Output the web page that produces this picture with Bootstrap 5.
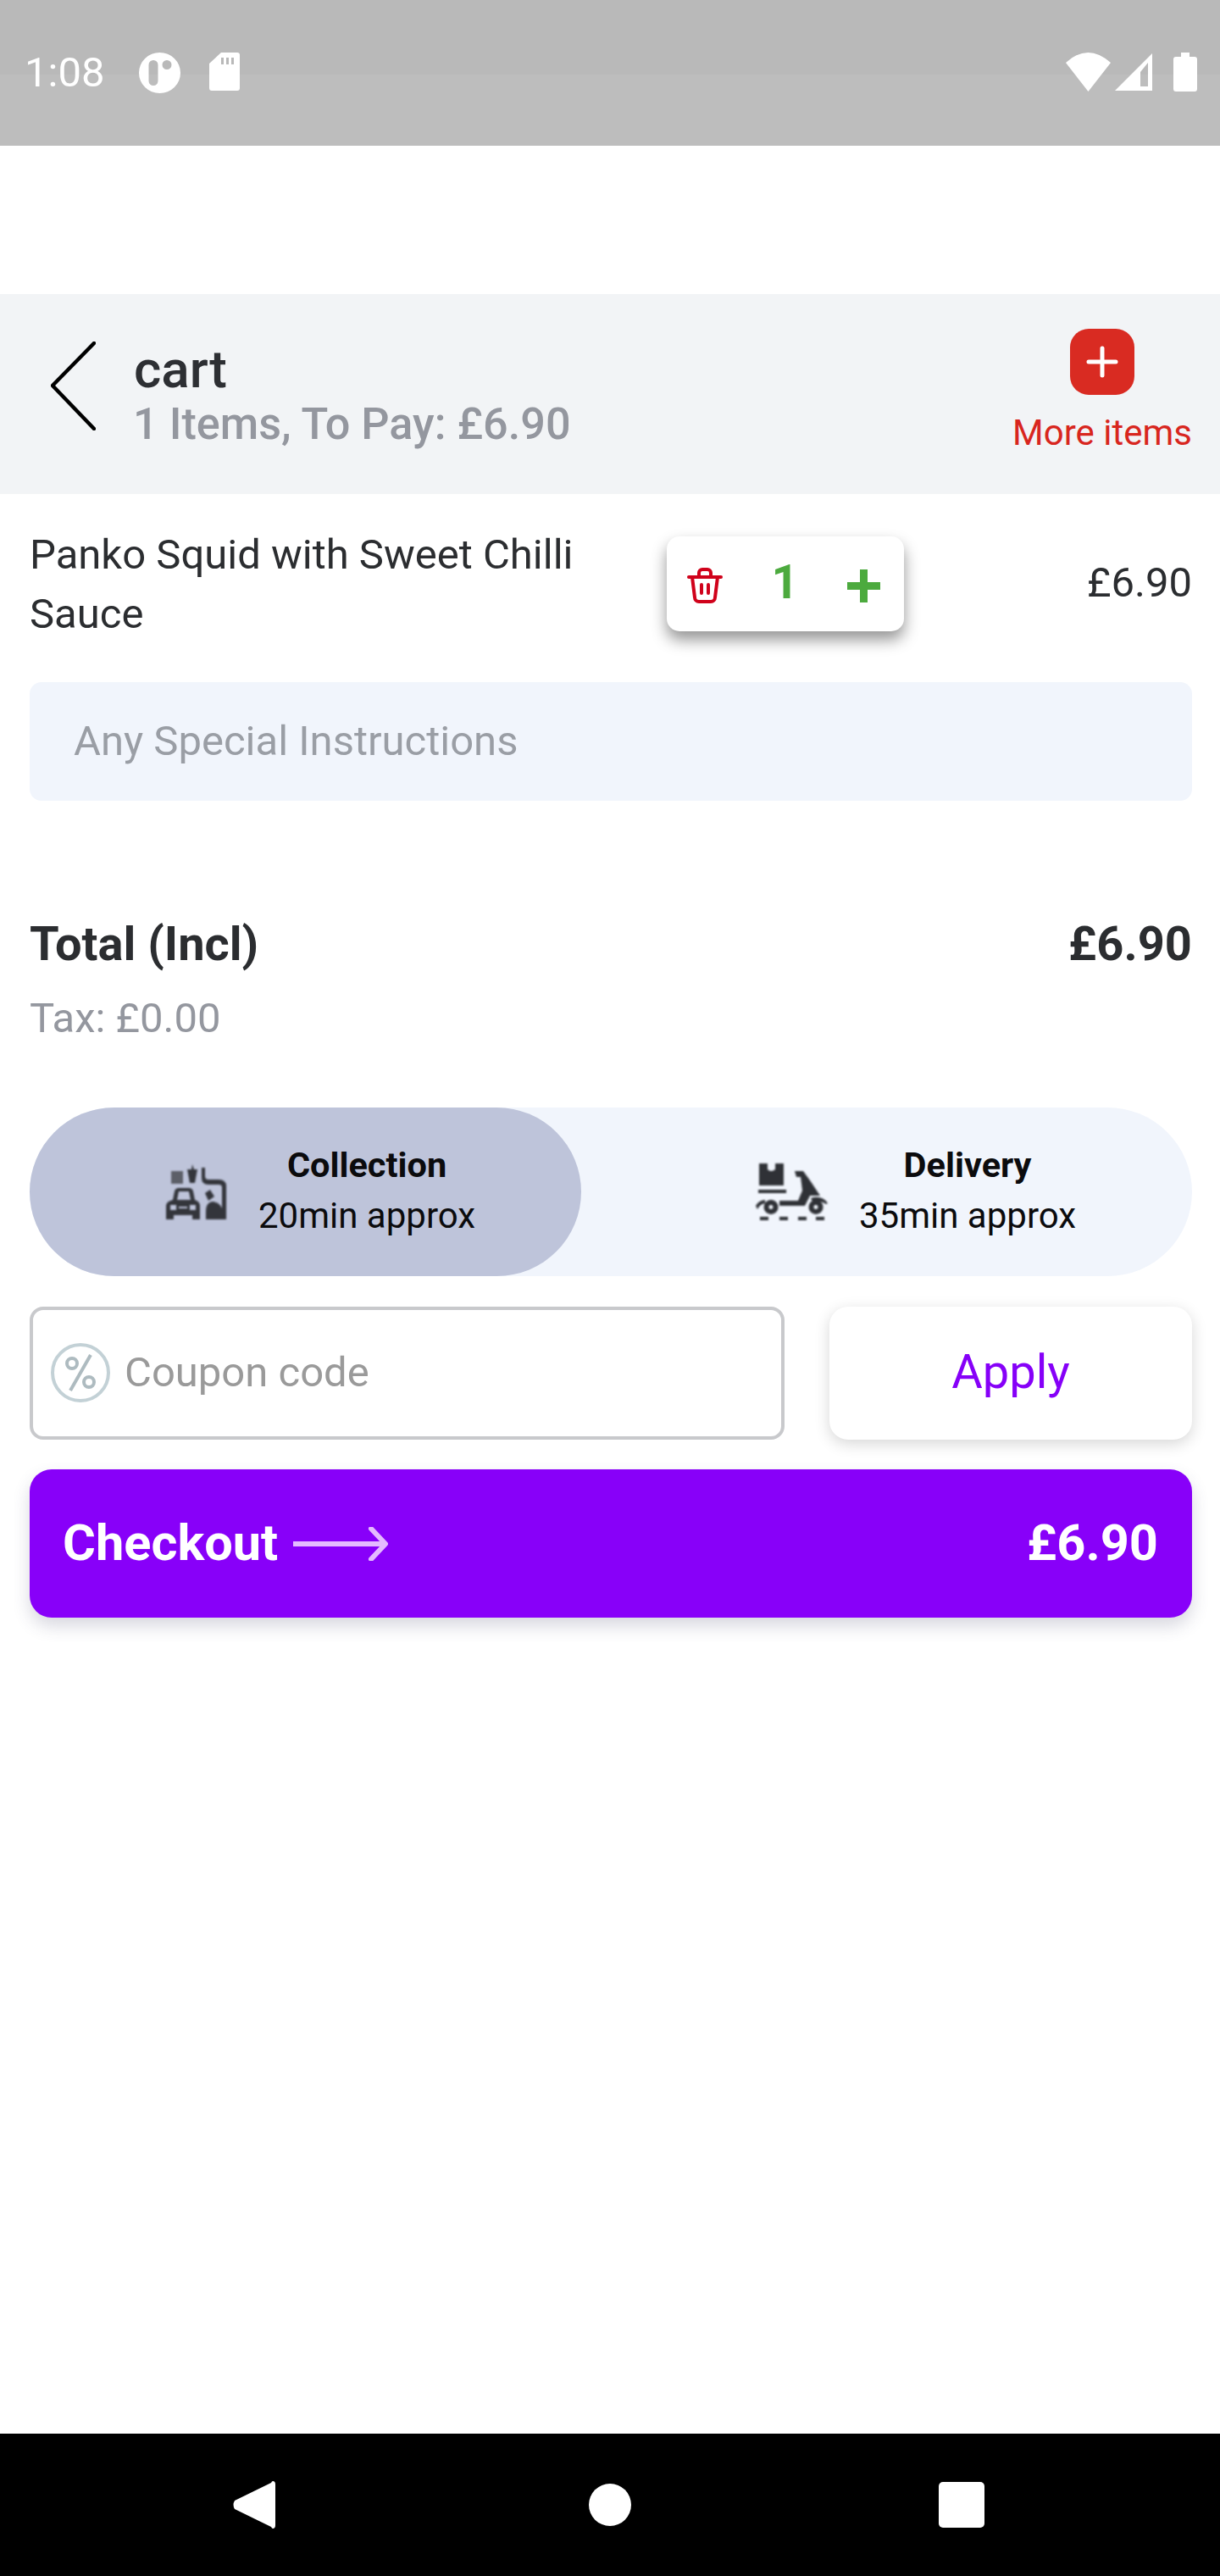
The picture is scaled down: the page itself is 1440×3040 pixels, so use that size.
<!doctype html>
<html lang="en">
<head>
<meta charset="utf-8">
<title>cart</title>
<link href="https://cdn.jsdelivr.net/npm/bootstrap@5.3.0/dist/css/bootstrap.min.css" rel="stylesheet">
<style>
html,body{margin:0;background:#fff}
body{width:1440px;height:3040px;font-family:Roboto,"Liberation Sans",sans-serif;color:#2b2d30}
.sys-top{height:172px;padding:62px 27px 0 29px;background:linear-gradient(#b9b9b9 0,#b9b9b9 88px,#bdbdbd 88px,#bdbdbd 100%)}
.sys-time{font-size:49px;line-height:48px;color:#fff;margin-top:0;font-weight:400;width:93px}
.gap-a{margin-left:42px}.gap-b{margin-left:34px}.gap-c{margin-left:5px}.gap-d{margin-left:25px}
.top-blank{height:175px}
.head-bar{height:236px;background:#f2f4f6;padding:0 33px 0 60px}
.back-ic{margin-top:56px;margin-right:45px}
.head-txt{padding-top:61px}
.head-title{font-size:62px;line-height:56px;font-weight:500;color:#2d2f33}
.head-sub{font-size:52.200px;line-height:66px;font-weight:500;color:#94979f;padding-top:4px;margin-left:-1px}
.more-col{padding-top:41px}
.more-btn{width:76px;height:78px;background:#d92b22;border-radius:22px}
.more-lbl{font-size:42px;line-height:50px;color:#d8261e;margin-top:20px}
.page-x{padding:0 33px 0 35px}
.item-row{padding-top:37px}
.item-name{width:700px;margin-right:52px;font-size:49px;line-height:70px;color:#2b2d30}
.qty-box{width:280px;height:112px;margin-top:13px;background:#fff;border-radius:15px;box-shadow:0 10px 18px rgba(0,0,0,.42);padding:0 28px 0 24px}
.qty-trash{margin-top:4px}
.qty-num{font-size:56px;line-height:56px;font-weight:700;color:#4caa3e;margin-top:-4px}
.qty-plus{margin-top:4px}
.item-price{font-size:49px;line-height:70px;margin-top:33px;color:#2b2d30}
.note-box{height:140px;margin-top:45px;background:#f1f5fc;border-radius:14px;padding:0 0 0 52px;font-size:49px;color:#9a9ea5}
.total-row{margin-top:134px;font-size:56px;line-height:70px;font-weight:700;color:#2b2d30}
.tax-row{margin-top:23px;font-size:49px;line-height:60px;color:#94979f}
.mode-bar{height:199px;margin-top:75px;background:#f1f5fc;border-radius:100px}
.mode-on{width:651px;background:#bec4da;border-radius:100px;padding-left:161px}
.mode-off{padding-left:206px}
.mode-gap-a{margin-right:37px}.mode-gap-b{margin-right:37px}
.mode-ic{filter:blur(.8px)}
.mode-txt{margin-top:-4px}
.mode-t{font-size:41.500px;line-height:60px;font-weight:700;color:#0b0b0d}
.mode-s{font-size:42px;line-height:60px;color:#0b0b0d}
.promo-row{margin-top:36px;height:157px}
.promo-in{width:891px;height:157px;border:4px solid #c8c9cc;border-radius:16px;background:#fff;padding:0 0 2px 21px;font-size:49px;color:#9a9a9a}
.promo-in svg{margin-right:17px;filter:blur(.5px)}
.promo-go{width:428px;height:157px;border:0;border-radius:22px;background:#fff;box-shadow:0 5px 18px rgba(0,0,0,.16);font-size:56px;color:#8600f8;padding:0 0 4px}
.pay-btn{margin-top:35px;height:175px;border:0;border-radius:26px;background:#8800f9;color:#fff;font-size:59.500px;font-weight:700;padding:0 40px 0 39px;box-shadow:0 10px 20px rgba(60,60,100,.2)}
.pay-btn svg{margin-left:18px}
.nav-sys{height:168px;background:#000;padding-left:275px}
.nav-a{margin-left:370px}.nav-b{margin-left:363px}
</style>
</head>
<body class="d-flex flex-column">
<div class="sys-top d-flex justify-content-between align-items-start">
  <div class="d-flex align-items-start">
    <span class="sys-time">1:08</span>
    <svg class="gap-a" width="49" height="48" viewBox="0 0 49 48"><path fill="#fff" fill-rule="evenodd" d="M24.500 0a24.500 24 0 1 0 0 48a24.500 24 0 1 0 0-48zM17 9a5.500 5.500 0 0 1 5.500 5.500v19a5.500 5.500 0 0 1-11 0v-19A5.500 5.500 0 0 1 17 9zM33 9a5.500 5.500 0 1 1 0 11a5.500 5.500 0 0 1 0-11z"/></svg>
    <svg class="gap-b" width="36" height="45" viewBox="0 0 36 45"><path fill="#fff" fill-rule="evenodd" d="M14 0H33a3 3 0 0 1 3 3V42a3 3 0 0 1-3 3H3a3 3 0 0 1-3-3V13zM14 6v8h3V6zM20 6v8h3V6zM26 6v8h3V6z"/></svg>
  </div>
  <div class="d-flex align-items-start">
    <svg width="53" height="46" viewBox="0 0 53 46"><path fill="#fff" d="M0 12Q26-12 53 12L26.500 46z"/></svg>
    <svg class="gap-c" width="44" height="45" viewBox="0 0 44 45"><path fill="#fff" fill-rule="evenodd" d="M0 45L44 1V45zM30 40H39V12L30 23z"/></svg>
    <svg class="gap-d" width="28" height="46" viewBox="0 0 28 46"><path fill="#fff" d="M9 0H19V5H25a3 3 0 0 1 3 3V43a3 3 0 0 1-3 3H3a3 3 0 0 1-3-3V8a3 3 0 0 1 3-3H9z"/></svg>
  </div>
</div>
<div class="top-blank"></div>
<div class="head-bar d-flex align-items-start">
  <svg class="back-ic" width="53" height="105" viewBox="0 0 53 105"><path fill="none" stroke="#000" stroke-width="4.500" stroke-linecap="round" stroke-linejoin="round" d="M51 2L2 52L51 103"/></svg>
  <div class="head-txt flex-grow-1">
    <div class="head-title">cart</div>
    <div class="head-sub">1 Items, To Pay: £6.90</div>
  </div>
  <div class="more-col d-flex flex-column align-items-center">
    <div class="more-btn d-flex align-items-center justify-content-center">
      <svg width="38" height="38" viewBox="0 0 38 38"><path fill="none" stroke="#fff" stroke-width="5" stroke-linecap="round" d="M19 3V35M3 19H35"/></svg>
    </div>
    <div class="more-lbl">More items</div>
  </div>
</div>
<div class="page-x d-flex flex-column">
  <div class="item-row d-flex align-items-start">
    <div class="item-name">Panko Squid with Sweet Chilli Sauce</div>
    <div class="qty-box d-flex align-items-center justify-content-between">
      <svg class="qty-trash" width="42" height="42" viewBox="0 0 42 42"><g fill="none" stroke="#d0021b" stroke-width="4" stroke-linecap="round" stroke-linejoin="round"><path d="M2 11H40"/><path d="M14 11V6a4 4 0 0 1 4-4h6a4 4 0 0 1 4 4v5"/><path d="M6 11L9 35a5 5 0 0 0 5 5h14a5 5 0 0 0 5-5l3-24"/><path d="M17 20V30M25 20V30"/></g></svg>
      <span class="qty-num">1</span>
      <svg class="qty-plus" width="39" height="39" viewBox="0 0 39 39"><path fill="none" stroke="#4caa3e" stroke-width="9" d="M19.500 0V39M0 19.500H39"/></svg>
    </div>
    <div class="item-price ms-auto">£6.90</div>
  </div>
  <div class="note-box d-flex align-items-center">Any Special Instructions</div>
  <div class="total-row d-flex justify-content-between"><span>Total (Incl)</span><span>£6.90</span></div>
  <div class="tax-row">Tax: £0.00</div>
  <div class="mode-bar d-flex">
    <div class="mode-on d-flex align-items-center">
      <svg class="mode-gap-a mode-ic" width="72" height="65" viewBox="0 0 72 65"><g fill="#33353b">
        <rect x="6" y="8" width="14" height="15" fill="#5c5f68"/>
        <path d="M25 6H30L31 0L33 6H37L34 22H28z"/>
        <path d="M42 4H46V14Q46 18 50 18H62Q71 18 71 26V65H66V27Q66 24 62 24H50Q42 24 42 16z"/>
        <path fill-rule="evenodd" d="M8 42L10 32Q11 28 15 28H27Q31 28 32 32L34 42Q40 44 40 49V65H31V60H9V65H0V49Q0 44 8 42zM13 42H29L27 32H15zM5 48V54H12V48zM28 48V54H35V48zM15 50V52H25V50z"/>
        <path d="M46 34L52 30L57 38L50 43z"/>
        <path d="M47 65V56Q47 44 56 44Q64 46 66 52V65z"/>
      </g></svg>
      <div class="text-center mode-txt"><div class="mode-t">Collection</div><div class="mode-s">20min approx</div></div>
    </div>
    <div class="mode-off d-flex align-items-center">
      <svg class="mode-gap-b mode-ic" width="85" height="67" viewBox="0 0 85 67"><g fill="#2f3136">
        <path fill-rule="evenodd" d="M4 0H33V26H4zM14 0V7Q18 11 23 7V0z"/>
        <path d="M3 31H36V35H3z"/>
        <path d="M46 9H56L64 20L76 38H64L58 50H28V44H50L55 32L53 16H48z"/>
        <path d="M65 41Q78 37 85 47L83 48Q76 43 67 45z"/>
        <path d="M0 50Q3 44 11 43V47Q5 48 2 54z"/>
        <path fill-rule="evenodd" d="M18 43a8.500 8.500 0 1 0 .1 0zM18 49a2.500 2.500 0 1 1-.1 0zM71 43a8.500 8.500 0 1 0 .1 0zM71 49a2.500 2.500 0 1 1-.1 0z"/>
        <path d="M5 63H15V67H5zM28 63H38V67H28zM50 63H60V67H50zM71 63H81V67H71z"/>
      </g></svg>
      <div class="text-center mode-txt"><div class="mode-t">Delivery</div><div class="mode-s">35min approx</div></div>
    </div>
  </div>
  <div class="promo-row d-flex justify-content-between">
    <div class="promo-in d-flex align-items-center">
      <svg width="70" height="70" viewBox="0 0 70 70"><g fill="none" stroke="#c3d1d6" stroke-width="4"><circle cx="35" cy="35" r="33"/><circle cx="25" cy="24" r="6" stroke="#aebbc0"/><circle cx="45" cy="46" r="6" stroke="#aebbc0"/><path d="M47 14L23 56" stroke="#aebbc0"/></g></svg>
      <span>Coupon code</span>
    </div>
    <button class="promo-go btn" type="button">Apply</button>
  </div>
  <button class="pay-btn btn d-flex align-items-center justify-content-between" type="button">
    <span class="d-flex align-items-center">Checkout<svg width="112" height="40" viewBox="0 0 112 40"><path fill="none" stroke="#e4baff" stroke-width="6" stroke-linecap="round" stroke-linejoin="round" d="M1 20H108M92 2L109 20L92 38"/></svg></span>
    <span>£6.90</span>
  </button>
</div>
<div class="flex-grow-1"></div>
<div class="nav-sys d-flex align-items-center">
  <svg width="50" height="56" viewBox="0 0 50 56"><path fill="#fff" d="M47 0Q50 0 50 4V52Q50 56 47 56Q46 56 45 54L2 33Q-1 28 2 23L45 2Q46 0 47 0z"/></svg>
  <svg class="nav-a" width="50" height="50" viewBox="0 0 50 50"><circle cx="25" cy="25" r="25" fill="#fff"/></svg>
  <svg class="nav-b" width="54" height="54" viewBox="0 0 54 54"><rect width="54" height="54" rx="5" fill="#fff"/></svg>
</div>
<script src="https://cdn.jsdelivr.net/npm/bootstrap@5.3.0/dist/js/bootstrap.bundle.min.js"></script>
</body>
</html>
